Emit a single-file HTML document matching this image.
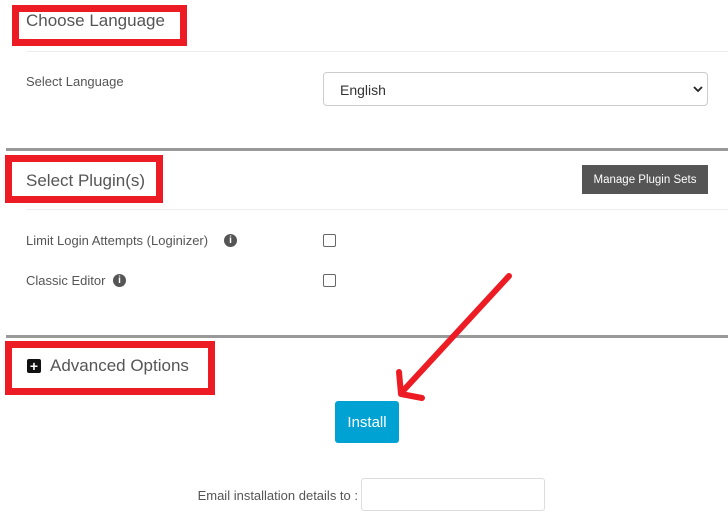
<!DOCTYPE html>
<html><head><style>
body{margin:0;width:728px;height:518px;background:#fff;position:relative;overflow:hidden;font-family:"Liberation Sans",sans-serif;color:#555}
.a{position:absolute}
.rb{position:absolute;border:7px solid #ed1c24;box-sizing:border-box}
.h{font-size:17px;color:#555}
.l{font-size:13px;color:#555}
.cb{position:absolute;width:11px;height:11px;border:1px solid #666;border-radius:2px;background:#fff}
.i{position:absolute;width:13px;height:13px;border-radius:50%;background:#555;color:#fff;font-size:10px;line-height:13px;text-align:center;font-weight:bold}
</style></head><body>
<div class="a h" style="left:26px;top:11px">Choose Language</div>
<div class="rb" style="left:12px;top:5px;width:175px;height:41px"></div>
<div class="a" style="left:26px;top:51px;width:702px;height:1px;background:#eee"></div>
<div class="a l" style="left:26px;top:74px">Select Language</div>
<div class="a" style="left:323px;top:72px;width:385px;height:34px;border:1px solid #ccc;border-radius:4px;box-sizing:border-box;font-size:14px;padding:9px 0 0 16px;color:#333">English<svg class="a" style="right:4px;top:13px" width="10" height="7" viewBox="0 0 10 7"><path d="M1 1l4 4 4-4" stroke="#222" stroke-width="1.8" fill="none"/></svg></div>
<div class="a" style="left:6px;top:148px;width:722px;height:3px;background:#999"></div>
<div class="a h" style="left:26px;top:171px">Select Plugin(s)</div>
<div class="rb" style="left:5px;top:155px;width:158px;height:48px"></div>
<div class="a" style="left:582px;top:165px;width:126px;height:29px;background:#555;color:#fff;font-size:11.5px;line-height:30px;text-align:center">Manage Plugin Sets</div>
<div class="a" style="left:26px;top:209px;width:702px;height:1px;background:#eee"></div>
<div class="a l" style="left:26px;top:233px">Limit Login Attempts (Loginizer)</div>
<div class="i" style="left:224px;top:234px">i</div>
<div class="cb" style="left:323px;top:234px"></div>
<div class="a l" style="left:26px;top:273px">Classic Editor</div>
<div class="i" style="left:113px;top:274px">i</div>
<div class="cb" style="left:323px;top:274px"></div>
<div class="a" style="left:6px;top:335px;width:722px;height:3px;background:#999"></div>
<div class="a" style="left:27px;top:359px;width:14px;height:14px;background:#111;border-radius:2px;color:#fff;font-size:14px;line-height:14px;text-align:center;font-weight:bold">+</div>
<div class="a h" style="left:50px;top:356px">Advanced Options</div>
<div class="rb" style="left:5px;top:341px;width:210px;height:54px"></div>
<div class="a" style="left:335px;top:401px;width:64px;height:42px;background:#00a2d4;border-radius:3px;color:#fff;font-size:15px;line-height:43px;text-align:center">Install</div>
<div class="a l" style="left:150px;top:488px;width:208px;text-align:right">Email installation details to :</div>
<div class="a" style="left:361px;top:478px;width:184px;height:33px;border:1px solid #ddd;border-radius:3px;box-sizing:border-box"></div>
<svg class="a" style="left:0;top:0" width="728" height="518"><g stroke="#ed1c24" stroke-width="6" stroke-linecap="round" stroke-linejoin="round" fill="none"><path d="M509 276L402 392"/><path d="M399 372L401 394L422 398"/></g></svg>
</body></html>
